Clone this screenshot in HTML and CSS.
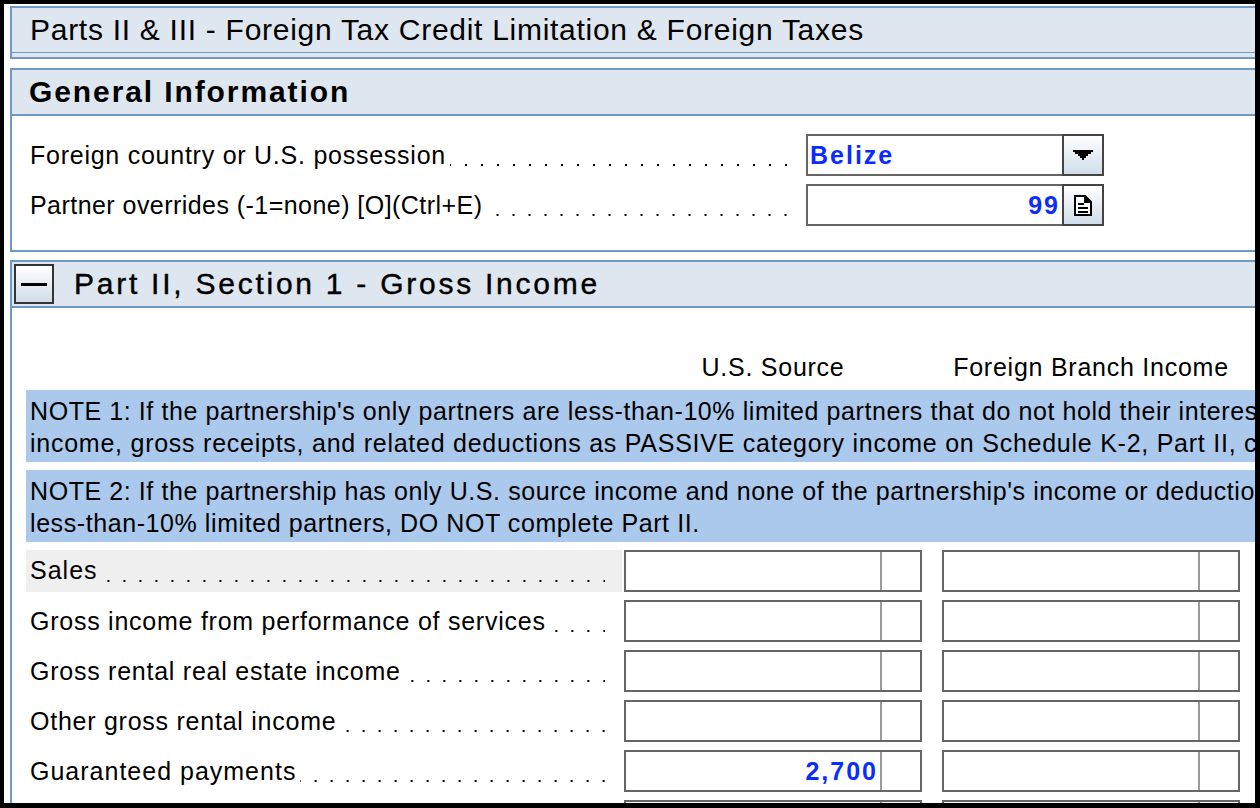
FILE: index.html
```html
<!DOCTYPE html>
<html lang="en">
<head>
    <meta charset="UTF-8">
    <meta name="viewport" content="width=device-width, initial-scale=1.0">
    <title>Parts II &amp; III - Foreign Tax Credit Limitation &amp; Foreign Taxes</title>
    <link rel="stylesheet" href="styles.css">
</head>
<body>
    <div class="window">
        <div class="page-title">
            <h1>Parts II &amp; III - Foreign Tax Credit Limitation &amp; Foreign Taxes</h1>
        </div>

        <div class="section">
            <div class="section-head">
                <h2>General Information</h2>
            </div>
            <div class="general-body">
                <div class="general-row">
                    <div class="label-line">
                        <span class="label-text">Foreign country or U.S. possession</span>
                        <span class="leader"></span>
                    </div>
                    <div class="field wide">
                        <div class="field-value left">Belize</div>
                        <div class="field-btn">
                            <svg width="20" height="10" viewBox="0 0 20 10"><path d="M0 0h20v2h-2v2h-3v2h-2v2h-2v2H9V8H7V6H5V4H2V2H0z" fill="#000"/></svg>
                        </div>
                    </div>
                </div>
                <div class="general-row">
                    <div class="label-line">
                        <span class="label-text tight">Partner overrides (-1=none) [O](Ctrl+E)</span>
                        <span class="leader"></span>
                    </div>
                    <div class="field wide">
                        <div class="field-value">99</div>
                        <div class="field-btn">
                            <svg width="18" height="21" viewBox="0 0 18 21"><path d="M1 1h10l6 6v13H1z" fill="#fff" stroke="#000" stroke-width="2"/><path d="M11 1v6h6" fill="#000" stroke="#000" stroke-width="2"/><path d="M4 9h6M4 13h10M4 17h10" fill="none" stroke="#000" stroke-width="2"/></svg>
                        </div>
                    </div>
                </div>
            </div>
        </div>

        <div class="section last">
            <div class="section-head with-toggle">
                <div class="toggle"><span class="toggle-bar"></span></div>
                <h2 class="regular">Part II, Section 1 - Gross Income</h2>
            </div>
            <div class="income-body">
                <div class="col-heads">
                    <div class="col-head">U.S. Source</div>
                    <div class="col-head">Foreign Branch Income</div>
                </div>

                <div class="note">
                    <p class="tight">NOTE 1: If the partnership's only partners are less-than-10% limited partners that do not hold their interest</p>
                    <p>income, gross receipts, and related deductions as PASSIVE category income on Schedule K-2, Part II, column</p>
                </div>
                <div class="note">
                    <p class="tight">NOTE 2: If the partnership has only U.S. source income and none of the partnership's income or deductions</p>
                    <p class="tight">less-than-10% limited partners, DO NOT complete Part II.</p>
                </div>

                <div class="income-row">
                    <div class="label-line shaded">
                        <span class="label-text spread">Sales</span>
                        <span class="leader"></span>
                    </div>
                    <div class="field"><div class="field-value"></div><div class="field-flag"></div></div>
                    <div class="field"><div class="field-value"></div><div class="field-flag"></div></div>
                </div>
                <div class="income-row">
                    <div class="label-line">
                        <span class="label-text">Gross income from performance of services</span>
                        <span class="leader"></span>
                    </div>
                    <div class="field"><div class="field-value"></div><div class="field-flag"></div></div>
                    <div class="field"><div class="field-value"></div><div class="field-flag"></div></div>
                </div>
                <div class="income-row">
                    <div class="label-line">
                        <span class="label-text">Gross rental real estate income</span>
                        <span class="leader"></span>
                    </div>
                    <div class="field"><div class="field-value"></div><div class="field-flag"></div></div>
                    <div class="field"><div class="field-value"></div><div class="field-flag"></div></div>
                </div>
                <div class="income-row">
                    <div class="label-line">
                        <span class="label-text">Other gross rental income</span>
                        <span class="leader"></span>
                    </div>
                    <div class="field"><div class="field-value"></div><div class="field-flag"></div></div>
                    <div class="field"><div class="field-value"></div><div class="field-flag"></div></div>
                </div>
                <div class="income-row">
                    <div class="label-line">
                        <span class="label-text spread">Guaranteed payments</span>
                        <span class="leader"></span>
                    </div>
                    <div class="field"><div class="field-value">2,700</div><div class="field-flag"></div></div>
                    <div class="field"><div class="field-value"></div><div class="field-flag"></div></div>
                </div>
                <div class="income-row">
                    <div class="label-line"></div>
                    <div class="field"><div class="field-value"></div><div class="field-flag"></div></div>
                    <div class="field"><div class="field-value"></div><div class="field-flag"></div></div>
                </div>
            </div>
        </div>
    </div>
</body>
</html>
```

FILE: styles.css
```css
:root {
    --line-blue: #7099c8;
    --head-bg: #dee6f0;
    --note-bg: #aac9ec;
    --field-line: #666666;
    --value-blue: #0a2cff;
}

* {
    margin: 0;
    padding: 0;
    box-sizing: border-box;
}

html, body {
    height: 808px;
    overflow: hidden;
}

body {
    background: #000;
    padding: 4px 5px 5px 4px;
    font-family: "Liberation Sans", Arial, sans-serif;
    font-size: 25px;
    letter-spacing: 0.75px;
    color: #000;
}

.window {
    background: #fff;
    height: 799px;
    padding: 2px 0 0 6px;
    overflow: hidden;
}

.page-title {
    height: 53px;
    background: var(--head-bg);
    border: 2px solid var(--line-blue);
    border-right: none;
    position: relative;
    padding-left: 18px;
    display: flex;
    align-items: flex-start;
}

.page-title::after {
    content: "";
    position: absolute;
    left: 0;
    right: 0;
    top: 44px;
    height: 1px;
    background: var(--line-blue);
}

h1 {
    font-size: 30px;
    font-weight: 400;
    line-height: 44px;
    white-space: nowrap;
    letter-spacing: 0.72px;
}

.section {
    margin-top: 9px;
    border-left: 2px solid var(--line-blue);
}

.section.last {
    margin-top: 8px;
}

.section-head {
    height: 48px;
    background: var(--head-bg);
    border-top: 2px solid var(--line-blue);
    border-bottom: 2px solid var(--line-blue);
    padding-left: 17px;
    display: flex;
    align-items: center;
}

h2 {
    font-size: 30px;
    font-weight: 700;
    letter-spacing: 1.9px;
    white-space: nowrap;
}

h2.regular {
    font-weight: 400;
    letter-spacing: 2.75px;
    -webkit-text-stroke: 0.4px #000;
}

.general-body {
    height: 136px;
    padding-top: 18px;
    border-bottom: 2px solid var(--line-blue);
    display: flex;
    flex-direction: column;
    gap: 8px;
}

.general-row {
    display: flex;
    height: 42px;
    padding-left: 14px;
}

.general-row .label-line {
    width: 761px;
    margin-right: 19px;
    flex-shrink: 0;
}

.label-line {
    display: flex;
    align-items: center;
    padding-left: 4px;
    height: 42px;
    white-space: nowrap;
}

.label-text {
    margin-right: 4px;
}

.label-text.tight {
    letter-spacing: 0.45px;
}

.label-text.spread {
    letter-spacing: 1px;
}

.shaded .label-text {
    margin-bottom: 2px;
}

/* dot leader, 2px dots every 16px, counted from the right */
.leader {
    flex: 1;
    align-self: flex-end;
    height: 2px;
    margin-bottom: 10px;
    background: linear-gradient(90deg, transparent 14px, #000 14px) right top / 16px 2px repeat-x;
}

.with-toggle {
    padding-left: 2px;
}

.toggle {
    width: 40px;
    height: 40px;
    border: 2px solid #333;
    background: linear-gradient(#fff, #cfdde9);
    display: flex;
    align-items: center;
    justify-content: center;
    margin-right: 20px;
}

.toggle-bar {
    width: 26px;
    height: 3px;
    background: #000;
}

.income-body {
    padding-left: 14px;
}

.col-heads {
    height: 82px;
    padding: 45px 0 0 598px;
    display: flex;
    gap: 20px;
}

.col-head {
    width: 298px;
    text-align: center;
    white-space: nowrap;
}

.note {
    height: 72px;
    background: var(--note-bg);
    margin-bottom: 8px;
    padding: 5px 0 0 4px;
    overflow: hidden;
    white-space: nowrap;
}

.note p {
    line-height: 32px;
}

.note p.tight {
    letter-spacing: 0.58px;
}

.income-row {
    display: flex;
    height: 42px;
    margin-bottom: 8px;
}

.income-row .label-line {
    width: 596px;
    margin-right: 2px;
    padding-right: 17px;
    flex-shrink: 0;
}

.shaded {
    background: #efefef;
}

.field {
    width: 298px;
    height: 42px;
    border: 2px solid var(--field-line);
    display: flex;
    margin-right: 20px;
    background: #fff;
    flex-shrink: 0;
}

.field.wide {
    margin-right: 0;
}

.field-value {
    flex: 1;
    text-align: right;
    font-weight: 700;
    letter-spacing: 2px;
    color: var(--value-blue);
    line-height: 38px;
    padding-right: 2px;
}

.field-value.left {
    text-align: left;
    padding-left: 2px;
}

.field-flag {
    width: 40px;
    border-left: 2px solid #999;
}

.field-btn {
    width: 42px;
    margin: -2px -2px -2px 0;
    border: 2px solid #444;
    background: linear-gradient(#fff, #cfdde9);
    display: flex;
    align-items: center;
    justify-content: center;
}
```
